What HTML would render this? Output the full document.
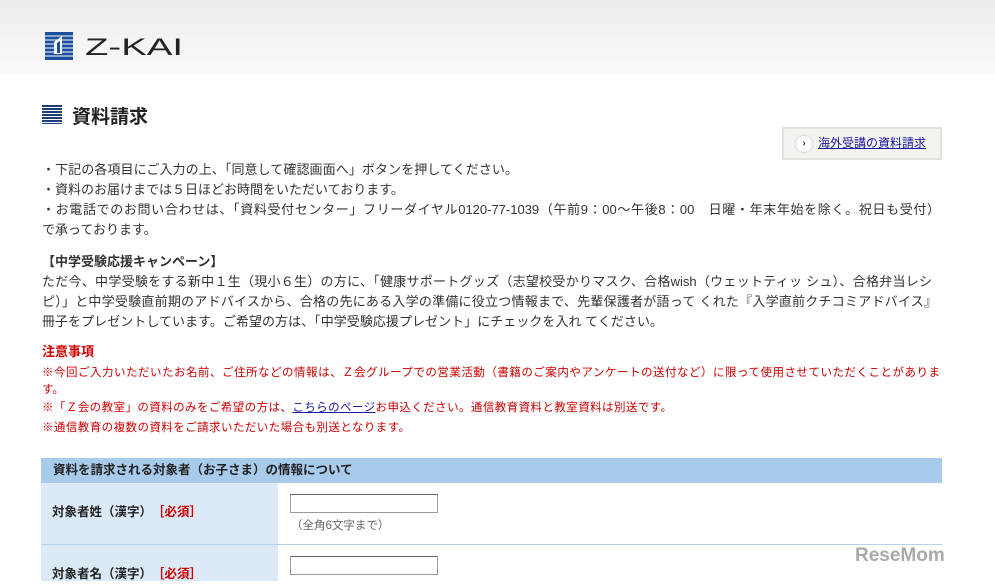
<!DOCTYPE html>
<html><head><meta charset="utf-8"><style>
*{margin:0;padding:0;box-sizing:border-box}
body{width:995px;height:581px;overflow:hidden;background:#fff;font-family:"Liberation Sans","Noto Sans CJK JP",sans-serif;color:#333;font-size:13px}
.hdr{height:75px;background:linear-gradient(#ececec,#fafafa)}
.logo{position:absolute;left:45px;top:32px}
.t{position:absolute;left:42px;white-space:nowrap;line-height:20px}
.j{white-space:normal;text-align:justify;text-align-last:justify;overflow:hidden;height:20px}
.r{color:#c00}
</style></head><body>
<div class="hdr"></div>
<div class="logo">
<svg width="140" height="28" viewBox="0 0 140 28">
<rect x="0" y="0" width="28" height="28" fill="#1c4f9c"/>
<g stroke="#fff" stroke-width="1"><line x1="0" y1="4" x2="28" y2="4"/><line x1="0" y1="8" x2="28" y2="8"/><line x1="0" y1="12" x2="28" y2="12"/><line x1="0" y1="16" x2="28" y2="16"/><line x1="0" y1="20" x2="28" y2="20"/><line x1="0" y1="24" x2="28" y2="24"/></g>
<path d="M9 22 L9 10 L17 4 L17 22 Z" fill="#fff"/>
<path d="M12 21 L12 11 L15 9 L15 21 Z" fill="#1c4f9c"/>
<text x="40" y="23" font-family="Liberation Sans" font-size="24" fill="#222" textLength="98" lengthAdjust="spacingAndGlyphs">Z-KAI</text>
</svg></div>
<div style="position:absolute;left:42px;top:105px;width:20px;height:19px;background:repeating-linear-gradient(#1c3f7c 0 2px,#fff 2px 3px)"></div>
<div style="position:absolute;left:72px;top:102px;font-size:19px;font-weight:bold;color:#222">資料請求</div>
<div style="position:absolute;left:782px;top:127px;width:160px;height:33px;background:#f3f3ef;border:2px solid #e3e3dc;font-size:12px;line-height:29px;padding-left:34px"><span style="position:absolute;left:12px;top:7px;width:16px;height:16px;border-radius:50%;background:#fff;box-shadow:0 0 2px #aaa;font-size:10px;line-height:16px;text-align:center;font-weight:bold">›</span><span style="color:#1a1a9c;text-decoration:underline">海外受講の資料請求</span></div>
<div class="t j" style="top:160px;width:476px">・下記の各項目にご入力の上、「同意して確認画面へ」ボタンを押してください。</div>
<div class="t" style="top:180px">・資料のお届けまでは５日ほどお時間をいただいております。</div>
<div class="t j" style="top:200px;width:898px">・お電話でのお問い合わせは、「資料受付センター」フリーダイヤル0120-77-1039（午前9：00〜午後8：00　日曜・年末年始を除く。祝日も受付）</div>
<div class="t" style="top:220px">で承っております。</div>
<div class="t" style="top:252px;font-weight:bold">【中学受験応援キャンペーン】</div>
<div class="t j" style="top:272px;width:890px">ただ今、中学受験をする新中１生（現小６生）の方に、「健康サポートグッズ（志望校受かりマスク、合格wish（ウェットティッ シュ）、合格弁当レシ</div>
<div class="t j" style="top:292px;width:895px">ピ）」と中学受験直前期のアドバイスから、合格の先にある入学の準備に役立つ情報まで、先輩保護者が語って くれた『入学直前クチコミアドバイス』</div>
<div class="t j" style="top:312px;width:621px">冊子をプレゼントしています。ご希望の方は、「中学受験応援プレゼント」にチェックを入れ てください。</div>
<div class="t r" style="top:342px;font-size:13px;font-weight:bold">注意事項</div>
<div class="t r j" style="top:363px;font-size:11.5px;width:898px">※今回ご入力いただいたお名前、ご住所などの情報は、Ｚ会グループでの営業活動（書籍のご案内やアンケートの送付など）に限って使用させていただくことがありま</div>
<div class="t r" style="top:380px;font-size:11.5px">す。</div>
<div class="t r j" style="top:398px;font-size:11.5px;width:630px">※「Ｚ会の教室」の資料のみをご希望の方は、<span style="color:#1a1a9c;text-decoration:underline">こちらのページ</span>お申込ください。通信教育資料と教室資料は別送です。</div>
<div class="t r j" style="top:418px;font-size:11.5px;width:368px">※通信教育の複数の資料をご請求いただいた場合も別送となります。</div>
<div style="position:absolute;left:41px;top:458px;width:901px;height:25px;background:#a9cbeb;font-weight:bold;font-size:12.5px;line-height:25px;padding-left:12px;color:#222">資料を請求される対象者（お子さま）の情報について</div>
<div style="position:absolute;left:41px;top:483px;width:237px;height:98px;background:#dceaf8"></div>
<div style="position:absolute;left:41px;top:544px;width:901px;height:1px;background:#b8d0e8"></div>
<div class="t" style="left:52px;top:502px;font-weight:bold;font-size:12.5px;color:#222">対象者姓（漢字）　<span class="r">［必須］</span></div>
<div class="t" style="left:52px;top:564px;font-weight:bold;font-size:12.5px;color:#222">対象者名（漢字）　<span class="r">［必須］</span></div>
<div style="position:absolute;left:290px;top:494px;width:148px;height:19px;border:1px solid #999;border-top-color:#666"></div>
<div class="t" style="left:291px;top:516px;font-size:11.5px;color:#666">（全角6文字まで）</div>
<div style="position:absolute;left:290px;top:556px;width:148px;height:19px;border:1px solid #999;border-top-color:#666"></div>
<div style="position:absolute;left:855px;top:545px;font-size:19px;font-weight:bold;color:#aaa;font-family:'Liberation Sans',sans-serif">ReseMom</div>
</body></html>
